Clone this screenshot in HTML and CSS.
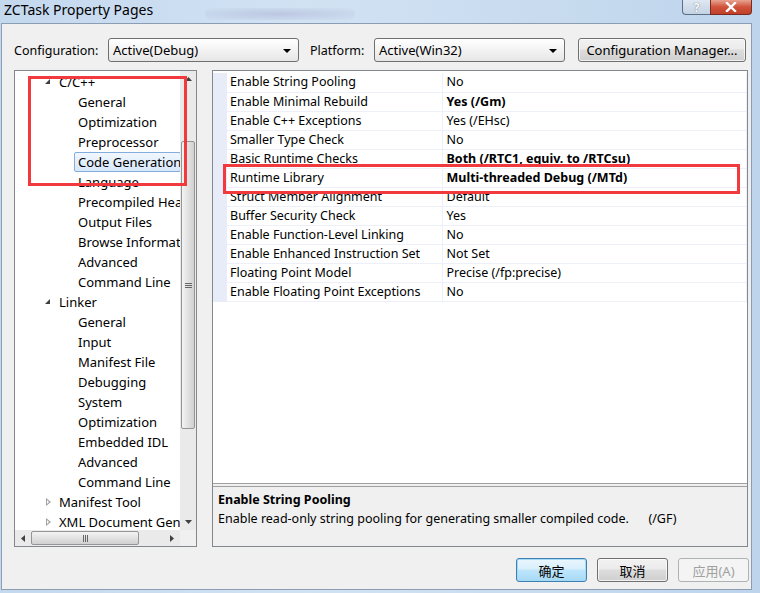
FILE: index.html
```html
<!DOCTYPE html>
<html>
<head>
<meta charset="utf-8">
<link rel="stylesheet" href="styles.css">
</head>
<body>
<div class="window">
  <div class="titlebar">
    <div class="title">ZCTask Property Pages</div>
    <div class="blur"></div>
    <div class="caption-btns">
      <div class="cbtn help">?</div>
      <div class="cbtn close">
        <svg width="14" height="10" viewBox="0 0 14 10"><path d="M3 1 L11 9 M11 1 L3 9" stroke="#fff" stroke-width="2.4" stroke-linecap="square"/></svg>
      </div>
    </div>
  </div>
  <div class="client">
    <div class="config-row">
      <span class="lbl lbl-config">Configuration:</span>
      <div class="combo combo-config"><span>Active(Debug)</span><i class="arrow"></i></div>
      <span class="lbl lbl-plat">Platform:</span>
      <div class="combo combo-plat"><span>Active(Win32)</span><i class="arrow"></i></div>
      <div class="btn btn-mgr">Configuration Manager...</div>
    </div>
    <div class="panels">
      <div class="tree-panel">
        <div class="tree-body">
          <ul class="tree">
            <li class="l1"><i class="tri open"></i>C/C++</li>
            <li class="l2">General</li>
            <li class="l2">Optimization</li>
            <li class="l2">Preprocessor</li>
            <li class="l2 sel"><span>Code Generation</span></li>
            <li class="l2">Language</li>
            <li class="l2">Precompiled Headers</li>
            <li class="l2">Output Files</li>
            <li class="l2">Browse Information</li>
            <li class="l2">Advanced</li>
            <li class="l2">Command Line</li>
            <li class="l1"><i class="tri open"></i>Linker</li>
            <li class="l2">General</li>
            <li class="l2">Input</li>
            <li class="l2">Manifest File</li>
            <li class="l2">Debugging</li>
            <li class="l2">System</li>
            <li class="l2">Optimization</li>
            <li class="l2">Embedded IDL</li>
            <li class="l2">Advanced</li>
            <li class="l2">Command Line</li>
            <li class="l1"><i class="tri closed"></i>Manifest Tool</li>
            <li class="l1"><i class="tri closed"></i>XML Document Generator</li>
          </ul>
          <div class="vscroll">
            <svg class="sarrow" width="7" height="4" viewBox="0 0 7 4"><path d="M0 4 L3.5 0 L7 4Z" fill="#404040"/></svg>
            <div class="vtrack"><div class="vthumb"><span class="grip-h"></span></div></div>
            <svg class="sarrow" width="7" height="4" viewBox="0 0 7 4"><path d="M0 0 L3.5 4 L7 0Z" fill="#404040"/></svg>
          </div>
        </div>
        <div class="hscroll-row">
          <div class="hscroll">
            <svg class="sarrow" width="4" height="7" viewBox="0 0 4 7"><path d="M4 0 L0 3.5 L4 7Z" fill="#404040"/></svg>
            <div class="htrack"><div class="hthumb"><span class="grip-v"></span></div></div>
            <svg class="sarrow" width="4" height="7" viewBox="0 0 4 7"><path d="M0 0 L4 3.5 L0 7Z" fill="#404040"/></svg>
          </div>
          <div class="corner"></div>
        </div>
        <div class="anno anno-tree"></div>
      </div>
      <div class="prop-panel">
        <div class="grid-area">
          <table class="grid">
            <tr><td class="gut"></td><td class="name">Enable String Pooling</td><td class="val">No</td></tr>
            <tr><td class="gut"></td><td class="name">Enable Minimal Rebuild</td><td class="val b">Yes (/Gm)</td></tr>
            <tr><td class="gut"></td><td class="name">Enable C++ Exceptions</td><td class="val">Yes (/EHsc)</td></tr>
            <tr><td class="gut"></td><td class="name">Smaller Type Check</td><td class="val">No</td></tr>
            <tr><td class="gut"></td><td class="name">Basic Runtime Checks</td><td class="val b">Both (/RTC1, equiv. to /RTCsu)</td></tr>
            <tr><td class="gut"></td><td class="name">Runtime Library</td><td class="val b">Multi-threaded Debug (/MTd)</td></tr>
            <tr><td class="gut"></td><td class="name">Struct Member Alignment</td><td class="val">Default</td></tr>
            <tr><td class="gut"></td><td class="name">Buffer Security Check</td><td class="val">Yes</td></tr>
            <tr><td class="gut"></td><td class="name">Enable Function-Level Linking</td><td class="val">No</td></tr>
            <tr><td class="gut"></td><td class="name">Enable Enhanced Instruction Set</td><td class="val">Not Set</td></tr>
            <tr><td class="gut"></td><td class="name">Floating Point Model</td><td class="val">Precise (/fp:precise)</td></tr>
            <tr><td class="gut"></td><td class="name">Enable Floating Point Exceptions</td><td class="val">No</td></tr>
          </table>
          <div class="anno anno-grid"></div>
        </div>
        <div class="splitter"></div>
        <div class="desc">
          <div class="desc-title">Enable String Pooling</div>
          <div class="desc-text">Enable read-only string pooling for generating smaller compiled code.&nbsp;&nbsp;&nbsp;&nbsp;&nbsp;&nbsp;(/GF)</div>
        </div>
      </div>
    </div>
    <div class="btn-row">
      <div class="btn dlg default">确定</div>
      <div class="btn dlg">取消</div>
      <div class="btn dlg disabled">应用(A)</div>
    </div>
  </div>
</div>
</body>
</html>
```

FILE: styles.css
```css
* { box-sizing: border-box; }
html, body { margin: 0; padding: 0; }
body {
  width: 760px;
  height: 593px;
  overflow: hidden;
  font-family: "Noto Sans", "Noto Sans CJK SC", sans-serif;
  font-size: 12px;
  color: #000;
  background: #c9dcef;
}
.window {
  width: 760px;
  height: 593px;
  display: flex;
  flex-direction: column;
  background: linear-gradient(90deg, #c4d8ee 0%, #d1e2f3 40%, #c9dcef 70%, #bdd4ec 100%);
}
.titlebar {
  height: 23px;
  flex: none;
  display: flex;
  align-items: flex-start;
  position: relative;
}
.title {
  font-size: 14px;
  line-height: 20px;
  padding-left: 4px;
  color: #000;
}
.blur {
  position: absolute;
  left: 205px;
  top: 8px;
  width: 150px;
  height: 12px;
  border-radius: 6px;
  background: radial-gradient(ellipse at center, rgba(150,150,190,0.35), rgba(200,210,230,0));
}
.caption-btns {
  margin-left: auto;
  margin-right: 8px;
  display: flex;
  height: 15px;
}
.cbtn {
  height: 15px;
  border: 1px solid #5b6f86;
  border-top: none;
  display: flex;
  align-items: center;
  justify-content: center;
}
.help {
  width: 28px;
  border-radius: 0 0 0 4px;
  background: linear-gradient(#dfe8f2, #c3d2e3);
  color: #fff;
  font-weight: bold;
  font-size: 12px;
  text-shadow: 0 0 1px #445;
  border-right: none;
}
.close {
  width: 42px;
  border-radius: 0 0 4px 0;
  background: linear-gradient(#e8a493 0%, #d0533a 50%, #c1402a 100%);
  border-color: #7a2a1e;
}
.client {
  flex: 1;
  margin: 0 8px 3px 1px;
  background: #f0f0f0;
  border: 1px solid #8a9db3;
  padding: 14px 4px 0 12px;
  display: flex;
  flex-direction: column;
}
.config-row {
  height: 24px;
  display: flex;
  align-items: center;
}
.lbl { font-size: 12.5px; flex: none; }
.lbl-config { width: 94px; }
.lbl-plat { width: 64px; margin-left: 11px; }
.combo {
  height: 24px;
  flex: none;
  border: 1px solid #707070;
  border-radius: 3px;
  background: linear-gradient(#ffffff, #f3f3f3 50%, #e6e6e6);
  display: flex;
  align-items: center;
  padding-left: 4px;
  font-size: 13px;
  position: relative;
}
.combo-config { width: 191px; }
.combo-plat { width: 191px; }
.arrow {
  position: absolute;
  right: 7px;
  top: 10px;
  width: 0; height: 0;
  border-left: 4px solid transparent;
  border-right: 4px solid transparent;
  border-top: 4px solid #000;
}
.btn {
  height: 24px;
  border: 1px solid #707070;
  border-radius: 3px;
  background: linear-gradient(#f2f2f2 0%, #ebebeb 45%, #dddddd 50%, #cfcfcf 100%);
  display: flex;
  align-items: center;
  justify-content: center;
  font-size: 13px;
  box-shadow: inset 0 0 0 1px rgba(255,255,255,0.7);
}
.btn-mgr { width: 168px; margin-left: 13px; flex: none; }
.panels {
  margin-top: 8px;
  display: flex;
  gap: 15px;
  height: 477px;
}
.tree-panel {
  width: 183px;
  border: 1px solid #828790;
  background: #fff;
  display: flex;
  flex-direction: column;
  position: relative;
}
.tree-body {
  flex: 1;
  display: flex;
  overflow: hidden;
}
.tree {
  flex: 1;
  list-style: none;
  margin: 0;
  padding: 1px 0 0 0;
  overflow: hidden;
  white-space: nowrap;
}
.tree li {
  height: 20px;
  line-height: 20px;
  font-size: 13px;
  position: relative;
}
.tree .l1 { padding-left: 44px; }
.tree .l2 { padding-left: 63px; }
.tree .sel { padding-left: 59px; }
.tree .sel span {
  display: inline-block;
  height: 20px;
  line-height: 18px;
  padding: 0 3px;
  border: 1px solid #84acdd;
  border-radius: 2px;
  background: linear-gradient(#f1f7fe, #d7e8fb);
  width: 107px;
}
.tri {
  display: inline-block;
  width: 14px;
  height: 20px;
  vertical-align: top;
  position: relative;
  margin-left: -14px;
}
.tri.open::after {
  content: "";
  position: absolute;
  left: 0px;
  top: 7px;
  width: 0; height: 0;
  border-left: 5px solid transparent;
  border-bottom: 5px solid #404040;
}
.tri.closed::after {
  content: "";
  position: absolute;
  left: 1px;
  top: 6px;
  width: 0; height: 0;
  border-top: 4px solid transparent;
  border-bottom: 4px solid transparent;
  border-left: 5px solid #a0a0a0;
}
.tri.closed::before {
  content: "";
  position: absolute;
  left: 2px;
  top: 8px;
  width: 0; height: 0;
  border-top: 2px solid transparent;
  border-bottom: 2px solid transparent;
  border-left: 2.5px solid #fff;
  z-index: 1;
}
.vscroll {
  width: 16px;
  flex: none;
  background: #eaeaea;
  display: flex;
  flex-direction: column;
  align-items: center;
  padding: 6px 0;
}
.vtrack { flex: 1; width: 100%; padding: 60px 1px 80px 1px; }
.vthumb {
  height: 288px;
  border: 1px solid #959595;
  border-radius: 2px;
  background: linear-gradient(90deg, #f3f3f3, #e2e2e2 50%, #d0d0d0);
  display: flex;
  align-items: center;
  justify-content: center;
}
.grip-h { width: 7px; height: 5px; border-top: 1px solid #666; border-bottom: 1px solid #666; position: relative; }
.grip-h::after { content: ""; position: absolute; left: 0; right: 0; top: 1px; height: 1px; background: #666; }
.hscroll-row { height: 16px; display: flex; flex: none; }
.hscroll {
  flex: 1;
  background: #eaeaea;
  display: flex;
  align-items: center;
  padding: 0 6px;
}
.htrack { flex: 1; height: 100%; padding: 1px 30px 1px 6px; }
.hthumb {
  width: 108px;
  height: 100%;
  border: 1px solid #959595;
  border-radius: 2px;
  background: linear-gradient(#f3f3f3, #e2e2e2 50%, #d0d0d0);
  display: flex;
  align-items: center;
  justify-content: center;
}
.grip-v { width: 5px; height: 7px; border-left: 1px solid #666; border-right: 1px solid #666; position: relative; }
.grip-v::after { content: ""; position: absolute; top: 0; bottom: 0; left: 1px; width: 1px; background: #666; }
.corner { width: 16px; background: #f0f0f0; }
.anno {
  position: absolute;
  border: 3px solid #f03a3e;
  pointer-events: none;
}
.anno-tree { left: 13px; top: 5px; width: 159px; height: 110px; }
.prop-panel {
  flex: 1;
  display: flex;
  flex-direction: column;
  border: 1px solid #828790;
}
.grid-area {
  flex: 1;
  background: #fff;
  padding: 2px 0 0 0;
  position: relative;
}
.grid {
  border-collapse: collapse;
  width: 534px;
}
.grid td {
  height: 19px;
  padding: 0;
  font-size: 12.5px;
  line-height: 18px;
  white-space: nowrap;
  border-bottom: 1px solid #edf0f9;
  border-right: 1px solid #edf0f9;
}
.grid td.gut {
  width: 14px;
  background: #e8ecf8;
  border-right: none;
  border-bottom: 1px solid #e8ecf8;
}
.grid td.name { width: 215px; padding-left: 3px; }
.grid td.val { padding-left: 4px; border-right: 1px solid #edf0f9; }
.grid td.b { font-weight: bold; }
.anno-grid { left: 10px; top: 93px; width: 517px; height: 30px; }
.splitter {
  height: 4px;
  border-top: 1px solid #a0a0a0;
  border-bottom: 1px solid #a0a0a0;
  background: #f0f0f0;
}
.desc {
  height: 59px;
  background: #f0f0f0;
  padding: 3px 5px;
  font-size: 12.5px;
}
.desc-title { font-weight: bold; line-height: 19px; }
.desc-text { line-height: 19px; }
.btn-row {
  margin-top: 11px;
  margin-right: -2px;
  display: flex;
  justify-content: flex-end;
  gap: 10px;
}
.btn.dlg { width: 71px; font-size: 13px; }
.btn.default {
  border-color: #3c7fb1;
  box-shadow: inset 0 0 0 1px #a6d9f4;
  background: linear-gradient(#eaf6fd 0%, #d9f0fc 45%, #bee6fd 50%, #a7d9f5 100%);
}
.btn.disabled {
  color: #a0a0a0;
  border-color: #adb2b5;
  background: #f4f4f4;
  box-shadow: none;
}
```
